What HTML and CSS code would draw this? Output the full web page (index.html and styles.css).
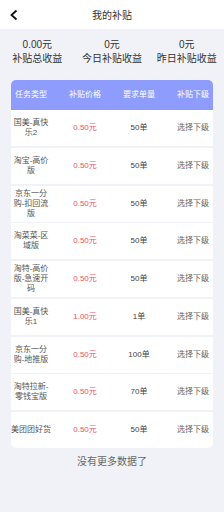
FILE: index.html
```html
<!DOCTYPE html>
<html lang="zh">
<head>
    <meta charset="UTF-8">
    <meta name="viewport" content="width=device-width, initial-scale=1.0">
    <title>我的补贴</title>
    <link rel="stylesheet" href="styles.css">
</head>
<body>
    <header class="top-bar">
        <svg class="back" width="10" height="12" viewBox="0 0 10 12">
            <path d="M7.5 1.5 L2.5 6 L7.5 10.5" fill="none" stroke="#111" stroke-width="1.8"/>
        </svg>
        <h1>我的补贴</h1>
    </header>

    <div class="stats">
        <div class="stat">
            <p>0.00元</p>
            <p>补贴总收益</p>
        </div>
        <div class="stat">
            <p>0元</p>
            <p>今日补贴收益</p>
        </div>
        <div class="stat">
            <p>0元</p>
            <p>昨日补贴收益</p>
        </div>
    </div>

    <div class="table">
        <div class="row head">
            <span>任务类型</span>
            <span>补贴价格</span>
            <span>要求单量</span>
            <span>补贴下级</span>
        </div>
        <div class="row">
            <span class="name">国美-真快乐2</span>
            <span class="price">0.50元</span>
            <span class="qty">50单</span>
            <span class="pick">选择下级</span>
        </div>
        <div class="row">
            <span class="name">淘宝-高价版</span>
            <span class="price">0.50元</span>
            <span class="qty">50单</span>
            <span class="pick">选择下级</span>
        </div>
        <div class="row">
            <span class="name">京东一分购-扣回流版</span>
            <span class="price">0.50元</span>
            <span class="qty">50单</span>
            <span class="pick">选择下级</span>
        </div>
        <div class="row">
            <span class="name">淘菜菜-区域版</span>
            <span class="price">0.50元</span>
            <span class="qty">50单</span>
            <span class="pick">选择下级</span>
        </div>
        <div class="row">
            <span class="name">淘特-高价版-急速开码</span>
            <span class="price">0.50元</span>
            <span class="qty">50单</span>
            <span class="pick">选择下级</span>
        </div>
        <div class="row">
            <span class="name">国美-真快乐1</span>
            <span class="price">1.00元</span>
            <span class="qty">1单</span>
            <span class="pick">选择下级</span>
        </div>
        <div class="row">
            <span class="name">京东一分购-地推版</span>
            <span class="price">0.50元</span>
            <span class="qty">100单</span>
            <span class="pick">选择下级</span>
        </div>
        <div class="row">
            <span class="name">淘特拉新-零钱宝版</span>
            <span class="price">0.50元</span>
            <span class="qty">70单</span>
            <span class="pick">选择下级</span>
        </div>
        <div class="row">
            <span class="name">美团团好货</span>
            <span class="price">0.50元</span>
            <span class="qty">50单</span>
            <span class="pick">选择下级</span>
        </div>
    </div>

    <p class="no-more">没有更多数据了</p>
</body>
</html>
```

FILE: styles.css
```css
body{
    margin: 0;
    background-color: #f1f2f7;
    font-family: "Liberation Sans", "Noto Sans CJK SC", sans-serif;
    color: #333;
}
p{
    margin: 0;
}
.top-bar{
    position: relative;
    height: 29px;
    background-color: #fff;
    display: flex;
    align-items: center;
    justify-content: center;
}
.top-bar h1{
    margin: 0;
    font-size: 10px;
    font-weight: normal;
    color: #333;
}
.top-bar .back{
    position: absolute;
    left: 9px;
    top: 9px;
}
.stats{
    display: grid;
    grid-template-columns: 1fr 1fr 1fr;
    padding-top: 9px;
    text-align: center;
    font-size: 10px;
    line-height: 14px;
    color: #333;
}
.table{
    margin: 14px 11px 0;
    border-radius: 5px;
    overflow: hidden;
    display: flex;
    flex-direction: column;
    gap: 1.75px;
}
.row{
    display: flex;
    justify-content: space-between;
    align-items: center;
    height: 36px;
    background-color: #fff;
    font-size: 8px;
    line-height: 10px;
}
.row > span{
    width: 40px;
    text-align: center;
}
.row.head{
    height: 30px;
    background-color: #8e9cfd;
    color: #fff;
    margin-bottom: -1.75px;
}
.name{
    color: #555;
}
.price{
    color: #f4515e;
}
.qty{
    color: #444;
}
.pick{
    color: #666;
}
.no-more{
    margin-top: 7px;
    text-align: center;
    font-size: 10px;
    line-height: 14px;
    color: #666;
}
```
